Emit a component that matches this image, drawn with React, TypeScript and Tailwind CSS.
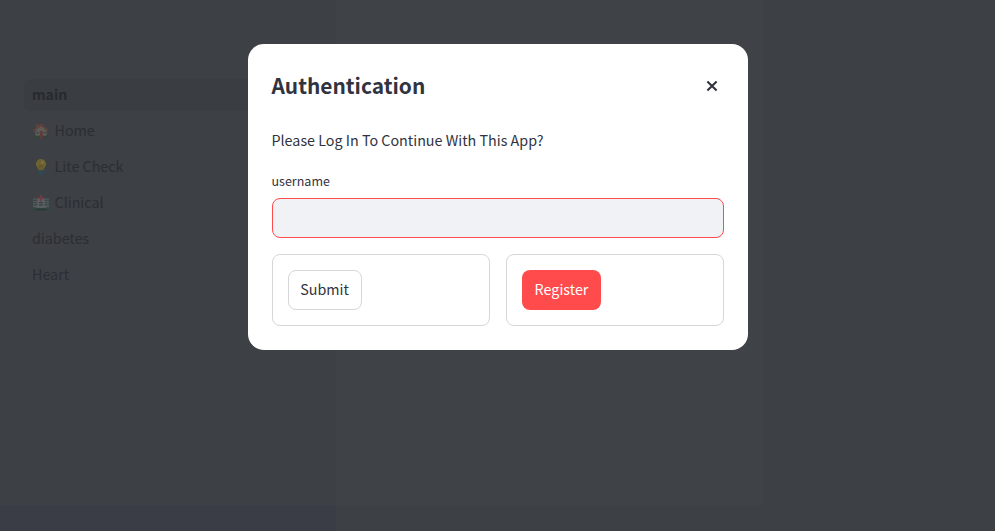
import type { ReactNode } from "react";

function House() {
  return (
    <svg viewBox="0 0 16 16" className="h-4 w-4 shrink-0">
      <path d="M2.5 7.5 8 3l5.5 4.5V14h-11z" fill="#5c5d58" />
      <path d="M2 9.5h12M2 11.5h12" stroke="#66675f" strokeWidth=".6" />
      <path d="M.6 12.6h14.8v2.6H.6z" fill="#35443a" />
      <path d="M6.7 8h3.1v7.3H6.7z" fill="#63393a" />
      <path d="M3.6 8.8h1.9v2H3.6zm7.2 0h1.9v2h-1.9z" fill="#37474f" />
      <path d="M2.8 1.3h2.2v4.2H2.8z" fill="#5d4540" />
      <path d="M.7 8.2 8 1.3l7.3 6.9" fill="none" stroke="#69413a" strokeWidth="1.7" />
    </svg>
  );
}

function Bulb() {
  return (
    <svg viewBox="0 0 16 16" className="h-4 w-4 shrink-0">
      <path d="M8 0a5.2 5.2 0 0 0-5.2 5.1c0 2.5 2.4 3.4 2.7 6.4h5c.3-3 2.7-3.9 2.7-6.4A5.2 5.2 0 0 0 8 0z" fill="#6e6330" />
      <path d="M6.8 11V6l1.2 1 1.2-1v5" fill="none" stroke="#645030" strokeWidth=".9" />
      <ellipse cx="9.5" cy="3.4" rx="1.5" ry="1.8" fill="#786f44" />
      <path d="M5.5 11.3h5v3L9.2 16H6.8l-1.3-1.7z" fill="#2e4b54" />
    </svg>
  );
}

function Hospital() {
  return (
    <svg viewBox="0 0 16 16" className="h-4 w-4 shrink-0">
      <path d="M0 3.5h16V14H0z" fill="#535a59" />
      <path d="M.3 5.3h4M.3 7.5h4M.3 9.7h4M11.7 5.3h4M11.7 7.5h4M11.7 9.7h4" stroke="#2f3f44" strokeWidth="1.2" strokeDasharray="1.1 .5" />
      <path d="M4.6 3h6.8v10H4.6z" fill="#5d5f61" />
      <path d="M6 7.8h4M6 10h4" stroke="#2d383e" strokeWidth="1.1" />
      <path d="M0 12.3h16V16H0z" fill="#31433f" />
      <path d="M3 12.3h10" stroke="#606364" strokeWidth="1" />
      <path d="M3 14.6h10" stroke="#2a3738" strokeWidth="1" />
      <path d="M8 0v6.2M5 3h6" stroke="#6f3a42" strokeWidth="2" />
    </svg>
  );
}

const items: { label: string; icon?: ReactNode; active?: boolean }[] = [
  { label: "main", active: true },
  { label: "Home", icon: <House /> },
  { label: "Lite Check", icon: <Bulb /> },
  { label: "Clinical", icon: <Hospital /> },
  { label: "diabetes" },
  { label: "Heart" },
];

function Sidebar() {
  return (
    <nav className="w-[336px] px-6 pt-[79px]">
      <ul className="flex flex-col gap-1">
        {items.map((item) => (
          <li
            key={item.label}
            className={
              item.active
                ? "flex h-8 items-center rounded-lg bg-[#3a3d41] px-2 text-[14.1px] font-bold text-[#272a30]"
                : "flex h-8 items-center rounded-lg px-2 text-[#2b2e34]"
            }
          >
            {item.icon && <span className="mr-[5.5px] ml-px flex w-4 shrink-0">{item.icon}</span>}
            <span className="pb-[2px] leading-5">{item.label}</span>
          </li>
        ))}
      </ul>
    </nav>
  );
}

function Dialog() {
  return (
    <section
      role="dialog"
      aria-labelledby="dialog-title"
      className="flex h-[306px] w-[500px] flex-col rounded-2xl bg-white px-6 text-[#31333f]"
    >
      <header className="flex h-[84px] items-center justify-between pr-[5.5px]">
        <h2 id="dialog-title" className="-mt-[2px] text-[20.9px] leading-7 font-bold">Authentication</h2>
        <button aria-label="Close" className="flex h-3 w-3 items-center justify-center">
          <svg viewBox="0 0 12 12" className="h-3 w-3">
            <path d="m1.4 1.4 9.2 9.2m0-9.2-9.2 9.2" stroke="#31333f" strokeWidth="2.1" />
          </svg>
        </button>
      </header>
      <p className="h-6 leading-6">Please Log In To Continue With This App?</p>
      <form className="mt-[17px] flex flex-col">
        <label htmlFor="username" className="h-6 text-[12.5px] leading-6">username</label>
        <input id="username" className="mt-[5px] h-10 w-full rounded-lg border border-[#ff4b4b] bg-[#f0f2f6] px-3 outline-none" />
        <div className="mt-4 grid grid-cols-2 gap-4">
          <div className="flex h-[72px] rounded-lg border border-[#d6d6d9] p-[15px]">
            <button type="button" className="h-10 w-[74px] rounded-lg border border-[#d6d6d9] bg-white pb-[2px] leading-5">Submit</button>
          </div>
          <div className="flex h-[72px] rounded-lg border border-[#d6d6d9] p-[15px]">
            <button type="button" className="h-10 w-[79px] rounded-lg bg-[#ff4b4b] pb-[2px] pl-px leading-5 text-white">Register</button>
          </div>
        </div>
      </form>
    </section>
  );
}

export default function App() {
  return (
    <div className="relative h-[531px] w-[995px] overflow-hidden bg-[#3d4044] font-['Noto_Sans_CJK_SC',sans-serif] text-[14.32px]">
      <div className="flex h-[505px]">
        <Sidebar />
        <main className="w-[427px] bg-[#3f4246]" />
      </div>
      <div className="h-[26px] w-[336px] bg-[#3b3d46]" />
      <div className="absolute inset-0 flex items-start justify-center pt-11">
        <Dialog />
      </div>
    </div>
  );
}
